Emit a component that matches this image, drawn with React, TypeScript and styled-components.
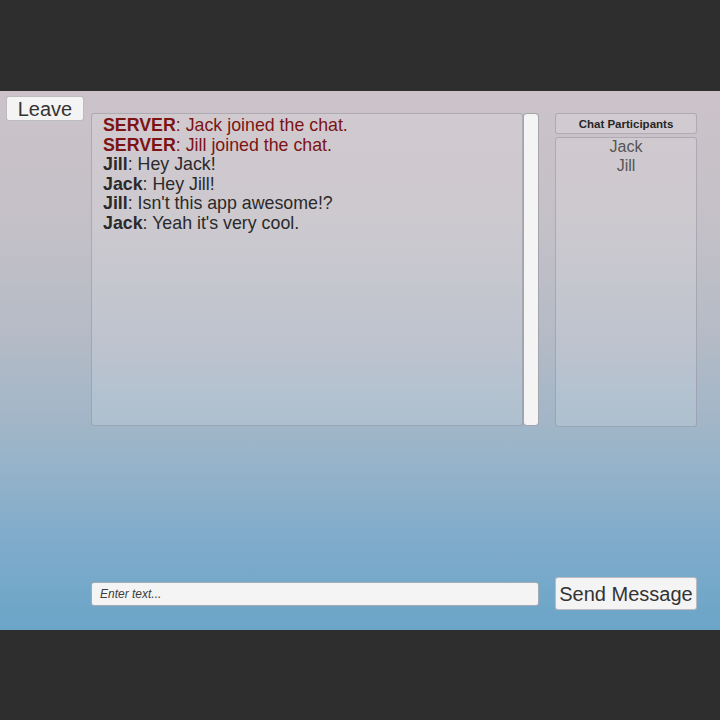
import React from "react";
import styled, { createGlobalStyle } from "styled-components";

const GlobalStyle = createGlobalStyle`
  html, body { margin: 0; padding: 0; background: #2e2e2e; }
  body { font-family: "Liberation Sans", Arial, sans-serif; }
`;

const Page = styled.div`
  width: 720px;
  height: 720px;
  display: flex;
  flex-direction: column;
  background: #2e2e2e;
`;

const Band = styled.div<{ $h: number }>`
  height: ${(p) => p.$h}px;
  flex: none;
  background: #2e2e2e;
`;

const Canvas = styled.div`
  height: 539px;
  flex: none;
  display: flex;
  background: linear-gradient(
    180deg,
    #cbc3c9 0%,
    #c4c0c7 25%,
    #b5bbc6 45%,
    #9db5c8 65%,
    #82accb 82%,
    #6aa5c8 100%
  );
`;

const LeftCol = styled.div`
  width: 91px;
  flex: none;
  padding: 5px 0 0 6px;
  box-sizing: border-box;
`;

const Button = styled.button<{ $w: number; $h: number }>`
  width: ${(p) => p.$w}px;
  height: ${(p) => p.$h}px;
  padding: 0;
  margin: 0;
  background: #f4f4f4;
  border: 1px solid rgba(140, 140, 150, 0.55);
  border-radius: 3px;
  font-family: "Liberation Sans", Arial, sans-serif;
  font-size: 20px;
  color: #333;
  display: flex;
  align-items: center;
  justify-content: center;
  box-sizing: border-box;
  line-height: 1;
`;

const MidCol = styled.div`
  width: 448px;
  flex: none;
  display: flex;
  flex-direction: column;
  padding: 22px 0 24px 0;
  box-sizing: border-box;
`;

const ChatBox = styled.div`
  height: 313px;
  display: flex;
`;

const Messages = styled.div`
  flex: 1;
  background: rgba(255, 255, 255, 0.14);
  border: 1px solid rgba(130, 130, 145, 0.45);
  border-radius: 3px;
  padding: 2px 0 0 11px;
  box-sizing: border-box;
  font-size: 17.8px;
  line-height: 19.6px;
  color: #2a2a2a;
`;

const Line = styled.div<{ $server?: boolean }>`
  white-space: nowrap;
  color: ${(p) => (p.$server ? "#7d1414" : "#2a2a2a")};
`;

const Name = styled.b`
  font-weight: bold;
`;

const Scrollbar = styled.div`
  width: 16px;
  flex: none;
  background: #f4f4f4;
  border: 1px solid rgba(110, 110, 120, 0.6);
  border-radius: 4px;
  box-sizing: border-box;
`;

const Input = styled.input`
  margin-top: auto;
  height: 24px;
  width: 448px;
  box-sizing: border-box;
  border: 1px solid rgba(110, 120, 135, 0.6);
  border-radius: 3px;
  background: #f4f4f4;
  padding: 0 0 0 8px;
  font-family: "Liberation Sans", Arial, sans-serif;
  font-size: 12px;
  font-style: italic;
  color: #333;
  outline: none;
  &::placeholder {
    color: #3c3c3c;
    opacity: 1;
  }
`;

const RightCol = styled.div`
  width: 142px;
  margin-left: 16px;
  flex: none;
  display: flex;
  flex-direction: column;
  padding: 22px 0 20px 0;
  box-sizing: border-box;
`;

const Header = styled.div`
  height: 21px;
  background: rgba(255, 255, 255, 0.16);
  border: 1px solid rgba(130, 130, 145, 0.45);
  border-radius: 3px;
  box-sizing: border-box;
  font-size: 11.5px;
  font-weight: bold;
  color: #262626;
  display: flex;
  align-items: center;
  justify-content: center;
`;

const ParticipantList = styled.div`
  margin-top: 3px;
  height: 290px;
  background: rgba(255, 255, 255, 0.14);
  border: 1px solid rgba(130, 130, 145, 0.45);
  border-radius: 3px;
  box-sizing: border-box;
  text-align: center;
  font-size: 16px;
  line-height: 18.5px;
  color: #555;
`;

const SendWrap = styled.div`
  margin-top: auto;
`;

const messages = [
  { name: "SERVER", text: "Jack joined the chat.", server: true },
  { name: "SERVER", text: "Jill joined the chat.", server: true },
  { name: "Jill", text: "Hey Jack!" },
  { name: "Jack", text: "Hey Jill!" },
  { name: "Jill", text: "Isn't this app awesome!?" },
  { name: "Jack", text: "Yeah it's very cool." },
];

export default function App() {
  return (
    <>
      <GlobalStyle />
      <Page>
        <Band $h={91} />
        <Canvas>
          <LeftCol>
            <Button $w={78} $h={25}>Leave</Button>
          </LeftCol>
          <MidCol>
            <ChatBox>
              <Messages>
                {messages.map((m, i) => (
                  <Line key={i} $server={m.server}>
                    <Name>{m.name}</Name>: {m.text}
                  </Line>
                ))}
              </Messages>
              <Scrollbar />
            </ChatBox>
            <Input placeholder="Enter text..." />
          </MidCol>
          <RightCol>
            <Header>Chat Participants</Header>
            <ParticipantList>
              <div>Jack</div>
              <div>Jill</div>
            </ParticipantList>
            <SendWrap>
              <Button $w={142} $h={33}>Send Message</Button>
            </SendWrap>
          </RightCol>
        </Canvas>
        <Band $h={90} />
      </Page>
    </>
  );
}
